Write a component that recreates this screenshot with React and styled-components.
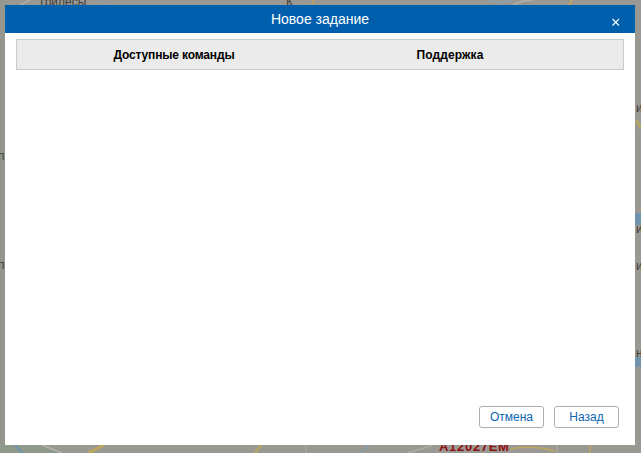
import React from "react";
import styled, { createGlobalStyle } from "styled-components";

const Global = createGlobalStyle`
  html, body { margin: 0; padding: 0; background: #9a9893; }
  body { width: 641px; height: 453px; overflow: hidden; font-family: "Liberation Sans", Arial, sans-serif; }
`;

const Page = styled.div`
  position: relative;
  width: 641px;
  height: 453px;
  box-sizing: border-box;
  padding: 5px 6px 8px 5px;
  display: flex;
`;

const MapLayer = styled.svg`
  position: absolute;
  left: 0;
  top: 0;
  width: 641px;
  height: 453px;
`;

const MapLabel = styled.text`
  font-family: "Liberation Sans", Arial, sans-serif;
  font-size: 12px;
  fill: #3f3e3a;
`;

const PlateLabel = styled.text`
  font-family: "Liberation Sans", Arial, sans-serif;
  font-size: 13px;
  font-weight: 700;
  letter-spacing: 0.7px;
  fill: #8f1212;
`;

const Dialog = styled.section`
  position: relative;
  flex: 1;
  display: flex;
  flex-direction: column;
  background: #fff;
`;

const Header = styled.header`
  position: relative;
  height: 28px;
  flex: none;
  display: flex;
  align-items: center;
  justify-content: center;
  background: #0060ae;
  color: #fff;
  font-size: 14px;
`;

const Close = styled.button`
  position: absolute;
  right: 14px;
  top: 11px;
  width: 10px;
  height: 10px;
  padding: 0;
  border: 0;
  background: none;
  display: block;
`;

const Body = styled.div`
  flex: 1;
  padding: 6px 11px 0;
`;

const TableHead = styled.div`
  display: grid;
  grid-template-columns: 314px 238px 1fr;
  height: 31px;
  box-sizing: border-box;
  border: 1px solid #ccc;
  background: #ebebeb;
`;

const HeadCell = styled.div`
  display: flex;
  align-items: center;
  justify-content: center;
  font-size: 12px;
  font-weight: 700;
  color: #000;
  letter-spacing: ${(p) => p.$spacing || "0"};
`;

const Footer = styled.footer`
  flex: none;
  display: flex;
  justify-content: flex-end;
  gap: 10px;
  padding: 0 16px 17px 0;
`;

const Button = styled.button`
  width: 65px;
  height: 22px;
  padding: 0;
  box-sizing: border-box;
  border: 1px solid #aeaeae;
  border-radius: 3px;
  background: #fff;
  color: #0a66b2;
  font-family: "Liberation Sans", Arial, sans-serif;
  font-size: 12px;
`;

export default function App() {
  return (
    <>
      <Global />
      <Page>
        <MapLayer viewBox="0 0 641 453">
          <rect width="641" height="453" fill="#9a9893" />
          <path d="M0 0H5V453H0Z" fill="#95968e" />
          <path d="M0 445H45L60 453H0Z" fill="#8f9a8c" />
          <path d="M15 445L22 453" stroke="#6f93ab" strokeWidth="2" fill="none" />
          <path d="M42 445L62 453" stroke="#b5b3ae" strokeWidth="1.5" fill="none" />
          <path d="M104 445L88 453" stroke="#bea65e" strokeWidth="3" fill="none" />
          <path d="M261 445L255 453" stroke="#bea65e" strokeWidth="2" fill="none" />
          <path d="M306 445V453" stroke="#b0aea9" strokeWidth="1" fill="none" />
          <path d="M368 445C368 449 364 451 358 453" stroke="#7f9bb0" strokeWidth="1.2" fill="none" />
          <path d="M433 445L408 453" stroke="#b0aea9" strokeWidth="1.5" fill="none" />
          <path d="M510 449C525 446 540 447 555 451" stroke="#bea65e" strokeWidth="1.5" fill="none" />
          <path d="M557 445V453" stroke="#b0aea9" strokeWidth="1" fill="none" />
          <path d="M590 445V453" stroke="#bea65e" strokeWidth="1.5" fill="none" />
          <path d="M636 120L641 128" stroke="#b3a468" strokeWidth="3" fill="none" />
          <rect x="635" y="213" width="6" height="12" fill="#6f93ab" />
          <rect x="635" y="357" width="6" height="10" fill="#6f93ab" />
          <path d="M490 0C497 3 505 4 512 0" stroke="#8ea0ae" strokeWidth="1.5" fill="none" />
          <path d="M513 5C520 1 527 0 533 0" stroke="#b0aea9" strokeWidth="2" fill="none" />
          <path d="M572 0L569 5" stroke="#bea65e" strokeWidth="2" fill="none" />
          <path d="M314 0L312 5" stroke="#bea65e" strokeWidth="1.5" fill="none" />
          <path d="M97 0C102 2 106 3 110 5" stroke="#8ea0ae" strokeWidth="1" fill="none" />
          <path d="M20 5L30 0" stroke="#b0aea9" strokeWidth="1.5" fill="none" />
          <MapLabel x="38" y="6">Трилесы</MapLabel>
          <MapLabel x="286" y="6">К</MapLabel>
          <MapLabel x="-2" y="160">п</MapLabel>
          <MapLabel x="-2" y="269">пс</MapLabel>
          <MapLabel x="636" y="112">и</MapLabel>
          <MapLabel x="636" y="233">и</MapLabel>
          <MapLabel x="636" y="270">иг</MapLabel>
          <MapLabel x="636" y="357">н</MapLabel>
          <PlateLabel x="439" y="451">А12027ЕМ</PlateLabel>
        </MapLayer>
        <Dialog>
          <Header>
            Новое задание
            <Close aria-label="Закрыть">
              <svg width="10" height="10" viewBox="0 0 10 10">
                <path d="M1.5 1L8 7.5M8 1L1.5 7.5" stroke="#fff" strokeWidth="1.1" fill="none" />
              </svg>
            </Close>
          </Header>
          <Body>
            <TableHead>
              <HeadCell $spacing="-0.16px">Доступные команды</HeadCell>
              <HeadCell $spacing="0.1px">Поддержка</HeadCell>
              <HeadCell />
            </TableHead>
          </Body>
          <Footer>
            <Button>Отмена</Button>
            <Button>Назад</Button>
          </Footer>
        </Dialog>
      </Page>
    </>
  );
}
